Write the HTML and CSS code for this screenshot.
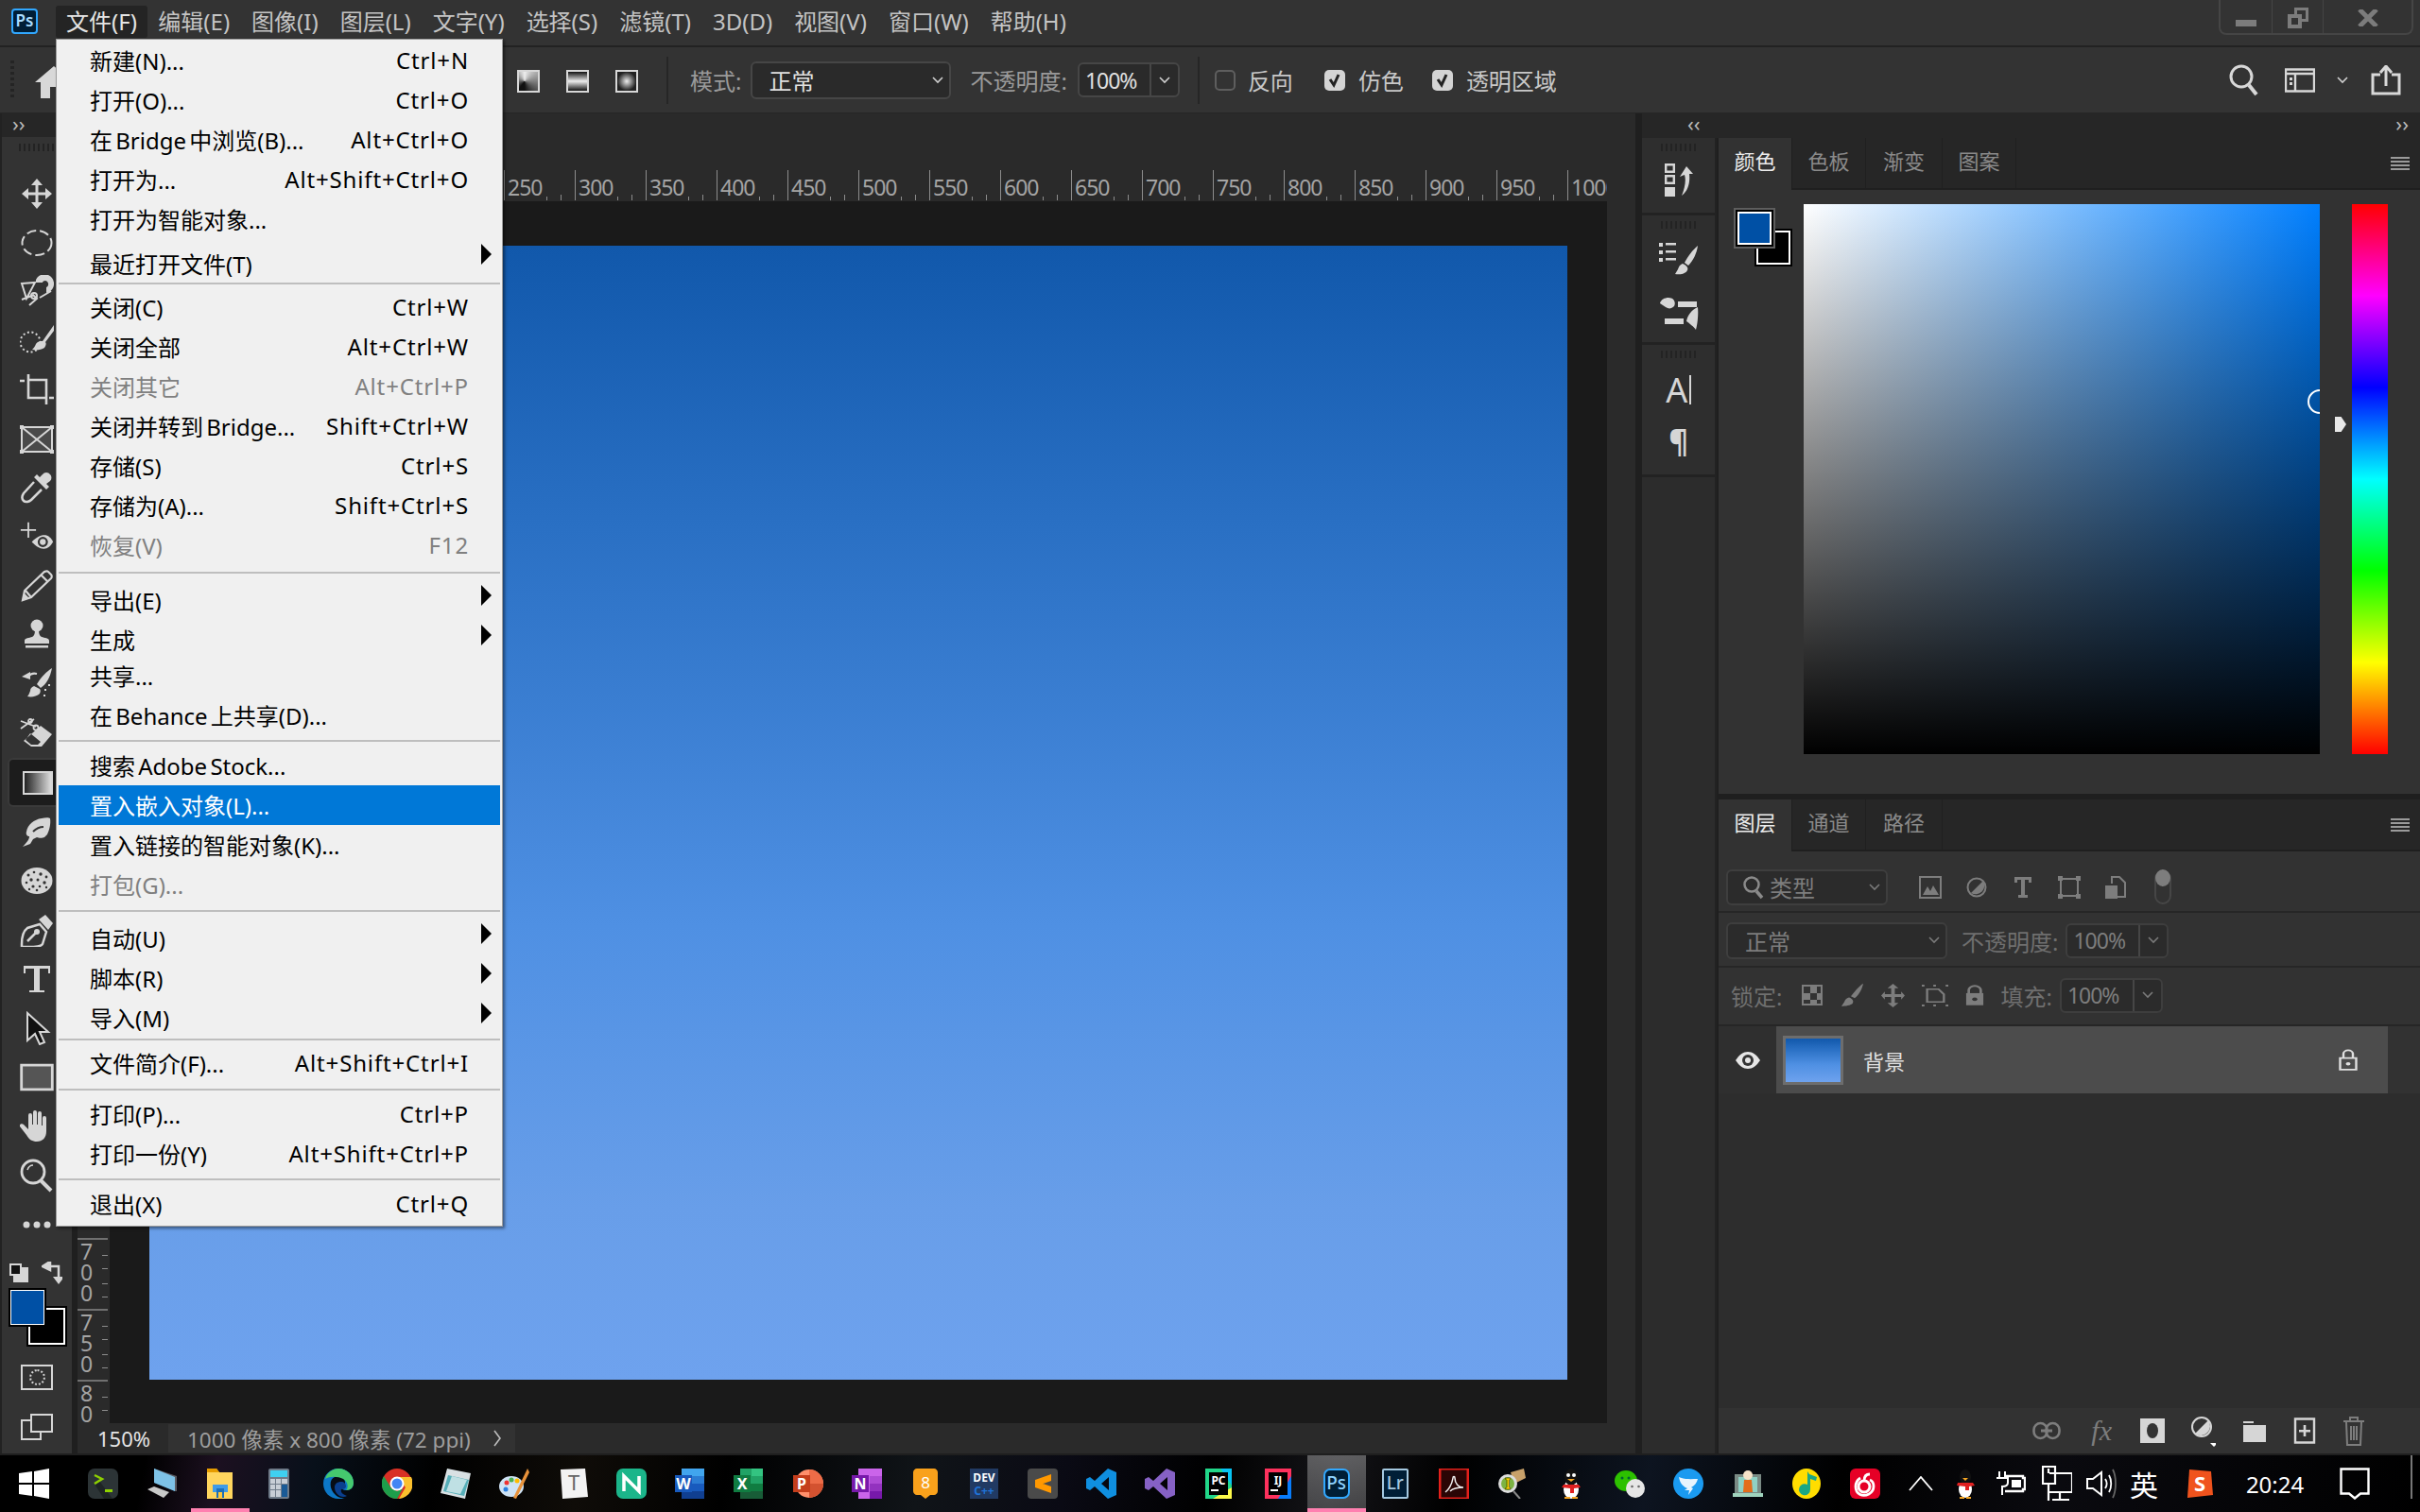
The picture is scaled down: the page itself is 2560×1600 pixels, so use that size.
FILE: index.html
```html
<!DOCTYPE html>
<html lang="zh-CN">
<head>
<meta charset="utf-8">
<title>Adobe Photoshop</title>
<link rel="stylesheet" href="styles.css">
</head>
<body>
<div class="app">
  <header class="titlebar">
    <div class="pslogo">Ps</div>
    <nav class="mainmenu">
      <span class="mi active">文件(F)</span><span class="mi">编辑(E)</span><span class="mi">图像(I)</span><span class="mi">图层(L)</span><span class="mi">文字(Y)</span><span class="mi">选择(S)</span><span class="mi">滤镜(T)</span><span class="mi">3D(D)</span><span class="mi">视图(V)</span><span class="mi">窗口(W)</span><span class="mi">帮助(H)</span>
    </nav>
    <div class="winbtns">
      <div class="wb wb1"><i class="wmin"></i></div>
      <div class="wb wb2"><svg viewBox="0 0 24 24" width="24" height="24"><path d="M8 1h15v15h-7v7H1V8h7zM11 4v4h5v5h4V4zM5 12v7h7v-7z" fill="#7c7c7c" fill-rule="evenodd"/></svg></div>
      <div class="wb wb3"><svg viewBox="0 0 22 18" width="22" height="18"><path d="M2 0l18 18M20 0L2 18" stroke="#7c7c7c" stroke-width="5" fill="none"/></svg></div>
    </div>
  </header>

  <section class="options">
    <div class="vgrip"></div>
    <svg class="home" viewBox="0 0 40 34" width="40" height="34"><path d="M20 0l20 17h-5v17H25V22h-9v12H6V17H0z" fill="#d8d8d8"/></svg>
    <div class="gico g-ang"></div>
    <div class="gico g-ref"></div>
    <div class="gico g-dia"></div>
    <div class="optsep s1"></div>
    <span class="lbl mode">模式:</span>
    <div class="sel optsel"><span>正常</span><svg class="chev" viewBox="0 0 12 8" width="12" height="8"><path d="M1 1l5 5 5-5" fill="none" stroke="#cfcfcf" stroke-width="1.6"/></svg></div>
    <span class="lbl opac">不透明度:</span>
    <div class="num optnum"><span class="val">100%</span><span class="car"><svg viewBox="0 0 12 8" width="12" height="8"><path d="M1 1l5 5 5-5" fill="none" stroke="#cfcfcf" stroke-width="1.6"/></svg></span></div>
    <div class="optsep s2"></div>
    <i class="cb off c1"></i><span class="cl cl1">反向</span>
    <i class="cb on c2"><svg viewBox="0 0 22 22" width="22" height="22"><path d="M6 10l4 6 5-11" fill="none" stroke="#222" stroke-width="3"/></svg></i><span class="cl cl2">仿色</span>
    <i class="cb on c3"><svg viewBox="0 0 22 22" width="22" height="22"><path d="M6 10l4 6 5-11" fill="none" stroke="#222" stroke-width="3"/></svg></i><span class="cl cl3">透明区域</span>
    <div class="optright">
      <svg viewBox="0 0 32 34" width="32" height="34"><circle cx="13" cy="13" r="11" fill="none" stroke="#d8d8d8" stroke-width="3"/><path d="M21 22l8 10" stroke="#d8d8d8" stroke-width="4"/></svg>
      <svg class="or-lay" viewBox="0 0 32 26" width="32" height="26"><path d="M1 1.5h30v23H1zM1 6h30M11 6v18" fill="none" stroke="#d8d8d8" stroke-width="2.4"/><path d="M5 10h3v3H5zM5 15h3v3H5z" fill="#d8d8d8"/></svg>
      <svg class="or-chev" viewBox="0 0 12 8" width="12" height="8"><path d="M1 1l5 5 5-5" fill="none" stroke="#cfcfcf" stroke-width="1.6"/></svg>
      <svg class="or-share" viewBox="0 0 32 32" width="32" height="32"><path d="M10 10H2v20h28V10h-8M16 22V2M10 8l6-7 6 7" fill="none" stroke="#d8d8d8" stroke-width="3"/></svg>
    </div>
  </section>

  <div class="work">
    <aside class="toolbar">
      <div class="collapse"><span>››</span></div>
      <div class="hgrip tgrip"></div>
      <div class="tools">
        <div class="tool"><svg viewBox="0 0 36 36"><path d="M18 2l6 7h-4.500v7.500H27V12l7 6-7 6v-4.500h-7.500V27H24l-6 7-6-7h4.500v-7.500H9V24l-7-6 7-6v4.500h7.500V9H12z"/></svg></div>
        <div class="tool"><svg viewBox="0 0 36 36"><ellipse cx="18" cy="18" rx="15.500" ry="13" fill="none" stroke="#d6d6d6" stroke-width="2" stroke-dasharray="10 4"/></svg></div>
        <div class="tool"><svg viewBox="0 0 36 36"><g fill="none" stroke="#d6d6d6" stroke-width="2"><path d="M2 9l14-1-9 17zM14 21l4 4-8 7M21 24l12-7M2 26l13-5"/><circle cx="15" cy="22" r="3"/></g><path d="M17 5a10 10 0 1 1 11 14v-6c3-1 3-6-1-7-2 0-3 1-3 2h-7z" fill="#d6d6d6"/></svg></div>
        <div class="tool"><svg viewBox="0 0 36 36"><circle cx="11" cy="19" r="10.500" fill="none" stroke="#d6d6d6" stroke-width="2" stroke-dasharray="2 2.600"/><path d="M36 1L24 18c-2 0-5 0-7 3-1 3-3 5-4 6 5 1 10 0 13-2 2-3 2-5 1-6l9-12z"/></svg></div>
        <div class="tool"><svg viewBox="0 0 36 36"><path d="M0 8h5M9 1v25h19M9 7h19v26M31 26h5" fill="none" stroke="#d6d6d6" stroke-width="2.600"/></svg></div>
        <div class="tool"><svg viewBox="0 0 36 30"><path d="M2 2h32v26H2z" fill="#4a4a4a" stroke="#d6d6d6" stroke-width="2"/><path d="M2 2l32 26M34 2L2 28" stroke="#d6d6d6" stroke-width="2"/><path d="M0 0h4v4H0zM32 0h4v4h-4zM0 26h4v4H0zM32 26h4v4h-4z"/></svg></div>
        <div class="tool"><svg viewBox="0 0 36 36"><path d="M24 3a5 5 0 0 1 8 0 5 5 0 0 1 0 7l-4 3 3 3-3 3-13-13 3-3 3 3z"/><path d="M15 11L4 23c-2 3-2 6 0 8s6 1 8-1l11-11" fill="none" stroke="#d6d6d6" stroke-width="2.500"/></svg></div>
        <div class="tool"><svg viewBox="0 0 40 36"><path d="M1 9h18M10 0v18" stroke="#d6d6d6" stroke-width="2" fill="none"/><path d="M14 23c6-6 11-8 15-8s8 3 10 8c-3 5-6 8-11 8s-9-3-14-8z"/><circle cx="27" cy="23" r="6" fill="#323232"/><circle cx="27" cy="23" r="3.500"/></svg></div>
        <div class="tool"><svg viewBox="0 0 36 36"><path d="M3 33l2-10L26 3c2-1 3-1 4 0l3 3c1 1 1 3 0 4L12 30zM6 23l6 7M23 7l7 7" fill="none" stroke="#d6d6d6" stroke-width="2.200"/><path d="M3 33l2-7 5 5z"/></svg></div>
        <div class="tool"><svg viewBox="0 0 36 36"><circle cx="18" cy="8" r="6.500"/><path d="M16 12h4c0 5 1 7 3 8 3 1 8 1 8 4v3H5v-3c0-3 5-3 8-4 2-1 3-3 3-8zM6 29h24v2.500H6z"/></svg></div>
        <div class="tool"><svg viewBox="0 0 36 36"><path d="M34 1c-5 3-12 10-16 17l4 4c6-4 10-11 12-21zM15 20c-3 1-4 3-4 5-1 3-2 5-3 6 4 1 10 0 13-3 1-2 1-4 0-5z"/><path d="M18 7c-4-1-7 0-9 3" fill="none" stroke="#d6d6d6" stroke-width="2"/><path d="M2 10l9-5 0 8zM26 23h2v2h-2zM30 18h2v2h-2zM25 29h2v2h-2z"/></svg></div>
        <div class="tool"><svg viewBox="0 0 36 36"><path d="M22 10l12 9-11 13H12l-8-6zM11 18l11 9-3 3H12l-6-5z" fill-rule="evenodd"/><g fill="none" stroke="#d6d6d6" stroke-width="1.800"><path d="M1 5l16 6M1 13L15 3"/><circle cx="11" cy="5" r="2"/><circle cx="17" cy="12" r="2.500"/></g></svg></div>
        <div class="tool active"><div class="t-grad"></div></div>
        <div class="tool"><svg viewBox="0 0 36 36"><path d="M3 34c5-5 7-8 7-11-2 0-4-2-3-5 1-7 8-13 16-14 4-1 8-1 9 0 1 6-1 13-3 17l-3 3c-2 1-6 1-8 0l-4 2-3 5z"/><path d="M14 18c3-3 7-5 11-5" fill="none" stroke="#333" stroke-width="2"/></svg></div>
        <div class="tool"><svg viewBox="0 0 36 30"><ellipse cx="18" cy="15" rx="16.500" ry="14"/><g fill="#333"><circle cx="9" cy="9" r="1.500"/><circle cx="15" cy="6" r="1.300"/><circle cx="22" cy="8" r="1.700"/><circle cx="28" cy="11" r="1.400"/><circle cx="12" cy="14" r="1.700"/><circle cx="19" cy="14" r="1.500"/><circle cx="26" cy="17" r="1.700"/><circle cx="7" cy="17" r="1.300"/><circle cx="14" cy="21" r="1.600"/><circle cx="21" cy="21" r="1.300"/><circle cx="10" cy="24" r="1.200"/><circle cx="28" cy="22" r="1.200"/><circle cx="18" cy="25" r="1.300"/></g></svg></div>
        <div class="tool"><svg viewBox="0 0 36 36"><path d="M2 33c0-7 2-14 6-17l13-4 7 8-4 13c-3 4-12 3-22 3zM8 30l9-9" fill="none" stroke="#d6d6d6" stroke-width="2.500"/><circle cx="18" cy="20" r="3"/><path d="M20 7l7-5 8 9-5 7z"/></svg></div>
        <div class="tool"><svg viewBox="0 0 36 36"><path d="M4 4h28v8h-2V7H21v23h5v2H10v-2h5V7H6v5H4z"/></svg></div>
        <div class="tool"><svg viewBox="0 0 36 36"><path d="M8 2l22 20h-9l5 11-5 2-5-11-8 7z" fill="#111" stroke="#d6d6d6" stroke-width="2"/></svg></div>
        <div class="tool"><svg viewBox="0 0 32 26"><path d="M1.500 1.500h29v23h-29z" fill="#555" stroke="#d6d6d6" stroke-width="2.500"/></svg></div>
        <div class="tool"><svg viewBox="0 0 36 36"><path d="M9 6a2 2 0 0 1 4 0v10h1V3a2 2 0 0 1 4 0v13h1V4a2 2 0 0 1 4 0v13h1V9a2 2 0 0 1 4 0v14c0 7-4 11-10 11-5 0-8-2-11-7l-7-9c-1-2 2-4 4-2l5 5z"/></svg></div>
        <div class="tool"><svg viewBox="0 0 36 36"><circle cx="14" cy="14" r="12" fill="none" stroke="#d6d6d6" stroke-width="2.800"/><path d="M22 23l11 11" stroke="#d6d6d6" stroke-width="4"/><path d="M8 12c1-3 3-5 6-5" fill="none" stroke="#d6d6d6" stroke-width="1.500"/></svg></div>
        <div class="tool"><svg viewBox="0 0 36 36"><circle cx="7" cy="18" r="3.500"/><circle cx="18" cy="18" r="3.500"/><circle cx="29" cy="18" r="3.500"/></svg></div>
      </div>
      <div class="colorbtns">
        <div class="defcol"><i class="dc-b"></i><i class="dc-f"></i></div>
        <svg viewBox="0 0 22 24" width="22" height="24"><path d="M9 0v9L1 5zM8 5h10v12" fill="none" stroke="#d6d6d6" stroke-width="2.500"/><path d="M9 0L2 5l7 5zM12 16h12l-6 8z" fill="#d6d6d6"/></svg>
      </div>
      <div class="tswatch"><i class="bgc"></i><i class="fgc"></i></div>
      <div class="maskbtn"><i></i></div>
      <div class="screenbtn"><i class="sb1"></i><i class="sb2"></i></div>
    </aside>

    <main class="doc">
      <div class="doctop"></div>
      <div class="hrwrap"><div class="hruler"><span class="rt">250</span><span class="rt">300</span><span class="rt">350</span><span class="rt">400</span><span class="rt">450</span><span class="rt">500</span><span class="rt">550</span><span class="rt">600</span><span class="rt">650</span><span class="rt">700</span><span class="rt">750</span><span class="rt">800</span><span class="rt">850</span><span class="rt">900</span><span class="rt">950</span><span class="rt">1000</span></div></div>
      <div class="docmid">
        <div class="vruler">
          <div class="vt"><span>7</span><span>0</span><span>0</span></div>
          <div class="vt"><span>7</span><span>5</span><span>0</span></div>
          <div class="vt"><span>8</span><span>0</span></div>
        </div>
        <div class="canvas"><div class="image"></div></div>
        <div class="vscroll"></div>
      </div>
      <div class="status">
        <span class="zoom">150%</span>
        <span class="info">1000 像素 x 800 像素 (72 ppi)<svg viewBox="0 0 10 18" width="10" height="18"><path d="M2 1l6 8-6 8" fill="none" stroke="#bdbdbd" stroke-width="1.600"/></svg></span>
      </div>
    </main>

    <aside class="panels">
      <div class="pstrip"><span class="l">‹‹</span><span class="r">››</span></div>
      <div class="pbody">
        <div class="dock">
          <div class="dsec d1"><div class="hgrip"></div>
            <svg viewBox="0 0 30 35" width="30" height="35"><path d="M1.200 1.200h8.600v7.600H1.200zM1.200 13.200h8.600v7.600H1.200z" fill="none" stroke="#d6d6d6" stroke-width="2.400"/><path d="M0 25h11v10H0z" fill="#d6d6d6"/><path d="M23 3l7 8h-4c1 9-1 18-8 23 3-7 5-16 3-22l-5 2z" fill="#d6d6d6"/></svg>
          </div>
          <div class="dsec d2"><div class="hgrip"></div>
            <svg class="ds-a" viewBox="0 0 42 34" width="42" height="34"><path d="M0 0h4v4H0zM7 0h11v2.500H7zM0 8h4v4H0zM7 8h11v2.500H7zM0 16h4v4H0zM7 16h11v2.500H7z" fill="#d6d6d6"/><path d="M41 3c-5 4-11 12-14 18l4 3c5-5 9-13 10-21zM25 22c-3 1-4 3-5 6l-3 5c5 1 11 0 13-4 1-2 0-5-5-7z" fill="#d6d6d6"/></svg>
            <svg class="ds-b" viewBox="0 0 42 34" width="42" height="34"><path d="M1 6c1-4 5-6 9-6 6 0 8 5 6 9-3 3-6 3-9 1zM20 4h20v6H20zM6 22h20v6H6zM41 10c-7 3-11 9-12 15 3 2 8 6 10 9 1-3 3-14 2-24z" fill="#d6d6d6"/></svg>
          </div>
          <div class="dsec d3"><div class="hgrip"></div>
            <div class="ds-txt"><span class="ds-A">A</span><i class="ds-bar"></i></div>
            <span class="ds-p">¶</span>
          </div>
        </div>
        <div class="pmain">
          <section class="panel color">
            <div class="tabs">
              <span class="tab on">颜色</span><span class="tab">色板</span><span class="tab t3">渐变</span><span class="tab">图案</span>
              <i class="burger"></i>
            </div>
            <div class="colorbody">
              <div class="pswatch"><i class="pbg"></i><i class="pfg"></i></div>
              <div class="picker"><i class="ring"></i></div>
              <i class="hmark"></i>
              <div class="hue"></div>
            </div>
          </section>
          <section class="panel layers">
            <div class="tabs">
              <span class="tab on">图层</span><span class="tab">通道</span><span class="tab t3">路径</span>
              <i class="burger"></i>
            </div>
            <div class="lrow filter">
              <div class="sel lsel1 dim"><svg viewBox="0 0 22 26" width="22" height="26"><circle cx="9" cy="10" r="7.500" fill="none" stroke="#8a8a8a" stroke-width="2.500"/><path d="M14 17l6 7" stroke="#8a8a8a" stroke-width="3.500"/></svg><span>类型</span><svg class="chev" viewBox="0 0 12 8" width="12" height="8"><path d="M1 1l5 5 5-5" fill="none" stroke="#7a7a7a" stroke-width="1.600"/></svg></div>
              <div class="ficons">
                <svg viewBox="0 0 24 28" width="24" height="28"><path d="M1 3h22v22H1z" fill="none" stroke="#7d7d7d" stroke-width="2"/><path d="M4 22l5-9 3 5 3-6 6 10z" fill="#7d7d7d"/></svg>
                <svg viewBox="0 0 24 28" width="24" height="28"><circle cx="12" cy="14" r="9.500" fill="none" stroke="#7d7d7d" stroke-width="2"/><path d="M19 7a9.500 9.500 0 0 1-13 13z" fill="#7d7d7d"/></svg>
                <svg viewBox="0 0 24 28" width="24" height="28"><path d="M3 3h18v6h-3V6h-4v16h3v3H7v-3h3V6H6v3H3z" fill="#7d7d7d"/></svg>
                <svg viewBox="0 0 24 24" width="24" height="24"><path d="M3 3h18v18H3z" fill="none" stroke="#7d7d7d" stroke-width="2"/><path d="M0 0h5v5H0zM19 0h5v5h-5zM0 19h5v5H0zM19 19h5v5h-5z" fill="#7d7d7d"/></svg>
                <svg viewBox="0 0 24 24" width="24" height="24"><path d="M8 8V1h8l6 6v15h-8" fill="none" stroke="#7d7d7d" stroke-width="2"/><path d="M1 10h13v14H1z" fill="#7d7d7d"/></svg>
                <div class="ftoggle"><i></i></div>
              </div>
            </div>
            <div class="lrow blend">
              <div class="sel lsel2 dim"><span>正常</span><svg class="chev" viewBox="0 0 12 8" width="12" height="8"><path d="M1 1l5 5 5-5" fill="none" stroke="#7a7a7a" stroke-width="1.600"/></svg></div>
              <span class="dl dl1">不透明度:</span>
              <div class="num lnum dim"><span class="val">100%</span><span class="car"><svg viewBox="0 0 12 8" width="12" height="8"><path d="M1 1l5 5 5-5" fill="none" stroke="#7a7a7a" stroke-width="1.600"/></svg></span></div>
            </div>
            <div class="lrow lock">
              <span class="dl dl2">锁定:</span>
              <div class="licons">
                <i class="chk"></i>
                <svg viewBox="0 0 26 40" width="26" height="26" preserveAspectRatio="none"><path d="M25 1c-5 5-10 15-13 21l4 3c5-6 8-16 9-24zM10 24c-3 1-4 4-5 7l-3 7c4 0 10-1 12-5 1-3 0-7-4-9z" fill="#7d7d7d"/></svg>
                <svg viewBox="0 0 26 36" width="25" height="25" preserveAspectRatio="none"><path d="M13 0l6 7h-4v9h7v-4l4 6-4 6v-4h-7v9h4l-6 7-6-7h4v-9H4v4l-4-6 4-6v4h7V7H7z" fill="#7d7d7d"/></svg>
                <svg viewBox="0 0 30 34" width="28" height="23" preserveAspectRatio="none"><path d="M6 7h13l6 8v12H6z" fill="none" stroke="#7d7d7d" stroke-width="2.500"/><path d="M0 0h3v3H0zM27 0h3v3h-3zM0 31h3v3H0zM27 31h3v3h-3zM13 0h3v3h-3zM13 31h3v3h-3z" fill="#7d7d7d"/></svg>
                <svg viewBox="0 0 22 36" width="20" height="23" preserveAspectRatio="none"><path d="M4 15V9a7 7 0 0 1 14 0v6" fill="none" stroke="#7d7d7d" stroke-width="3"/><path d="M1 14h20v20H1z" fill="#7d7d7d"/><circle cx="11" cy="24" r="3" fill="#333"/></svg>
              </div>
              <span class="dl dl3">填充:</span>
              <div class="num lnum dim"><span class="val">100%</span><span class="car"><svg viewBox="0 0 12 8" width="12" height="8"><path d="M1 1l5 5 5-5" fill="none" stroke="#7a7a7a" stroke-width="1.600"/></svg></span></div>
            </div>
            <div class="layerrow">
              <div class="eye"><svg viewBox="0 0 26 18" width="26" height="18"><path d="M0 9c4-6 8-9 13-9s9 3 13 9c-4 6-8 9-13 9S4 15 0 9z" fill="#e6e6e6"/><circle cx="13" cy="9" r="6" fill="#333"/><circle cx="13" cy="9" r="3" fill="#e6e6e6"/></svg></div>
              <div class="lcell">
                <div class="thumb"></div>
                <span class="lname">背景</span>
                <svg class="llock" viewBox="0 0 20 32" width="20" height="23" preserveAspectRatio="none"><path d="M5 13V7a5 5 0 0 1 10 0v6" fill="none" stroke="#e0e0e0" stroke-width="2.400"/><path d="M1.500 13.500h17v17h-17z" fill="none" stroke="#e0e0e0" stroke-width="2.400"/><circle cx="10" cy="22" r="2.500" fill="#e0e0e0"/></svg>
              </div>
            </div>
            <div class="lspace"></div>
            <div class="lfoot">
              <svg class="fo f-link" viewBox="0 0 30 20" width="30" height="20"><g fill="none" stroke="#7d7d7d" stroke-width="2.600"><rect x="1.500" y="2" width="14" height="16" rx="7"/><rect x="14.500" y="2" width="14" height="16" rx="7"/></g><path d="M9 8.500h12v3H9z" fill="#7d7d7d"/></svg>
              <span class="fo fx">fx</span>
              <svg class="fo" viewBox="0 0 26 26" width="26" height="26"><path d="M0 0h26v26H0z" fill="#d6d6d6"/><ellipse cx="13" cy="13" rx="6" ry="8" fill="#333"/></svg>
              <svg class="fo" viewBox="0 0 26 34" width="26" height="34"><circle cx="11" cy="13" r="10" fill="none" stroke="#d6d6d6" stroke-width="2"/><path d="M18 6a10 10 0 0 1-14 14z" fill="#d6d6d6"/><path d="M20 30h8l-4 4z" fill="#fff"/></svg>
              <svg class="fo" viewBox="0 0 26 24" width="26" height="24"><path d="M1 6V2h11v2H1zM1 6h24v18H1z" fill="#d6d6d6"/></svg>
              <svg class="fo" viewBox="0 0 24 28" width="24" height="28"><path d="M2 1.500h20v25H2z" fill="none" stroke="#d6d6d6" stroke-width="2.400"/><path d="M6 13h12v2.500H6zM10.700 8h2.600v12h-2.600z" fill="#d6d6d6"/></svg>
              <svg class="fo" viewBox="0 0 24 32" width="24" height="32"><path d="M1 6h22M8 6V2h8v4M4 7l1 24h14l1-24M9 11v15M12 11v15M15 11v15" fill="none" stroke="#7d7d7d" stroke-width="2"/></svg>
            </div>
          </section>
        </div>
      </div>
    </aside>
  </div>

  <footer class="taskbar">
    <div class="start"><svg viewBox="0 0 32 32" width="32" height="32"><path d="M0 5l14-2v12H0zM16 3l16-3v15H16zM0 17h14v12L0 27zM16 17h16v15l-16-3z" fill="#fff"/></svg></div>
    <div class="apps">
      <div class="app-i"><svg viewBox="0 0 32 32"><rect width="32" height="32" rx="7" fill="#2c3436"/><path d="M8 18l9 14h9L12 13z" fill="#1e2425"/><path d="M7 7l8 4-8 5" fill="none" stroke="#8ed100" stroke-width="2.500"/><path d="M18 22h8v3h-8z" fill="#8ed100"/></svg></div>
      <div class="app-i"><svg viewBox="0 0 32 32"><path d="M8 0l22 9v15L8 15z" fill="#48b5ee"/><path d="M8 0v15l22 9h2V8z" fill="#cfd8dc" opacity=".4"/><path d="M1 22l7-3 16 6-6 6z" fill="#c9c9c9"/></svg></div>
      <div class="app-i"><svg viewBox="0 0 32 32"><path d="M2 0h10l3 4h14v28H2z" fill="#ffd55e"/><path d="M2 0h10l3 4H2z" fill="#e69c00"/><path d="M8 17h16v8H8z" fill="#3f9be8"/><path d="M12 21h8v10h-8z" fill="#1c6fb8"/><path d="M14 25h4v7h-4z" fill="#ffc83d"/></svg></div>
      <div class="app-i"><svg viewBox="0 0 32 32"><rect x="5" width="22" height="32" rx="2" fill="#6f7b89"/><path d="M7 2h18v7H7z" fill="#3fd0f0"/><g fill="#c8ced6"><path d="M7 11h5v5H7zM13 11h5v5h-5zM19 11h6v5h-6zM7 17h5v5H7zM13 17h5v5h-5zM7 23h5v7H7zM13 23h5v7h-5z"/></g><path d="M19 17h6v13h-6z" fill="#1a5a96"/></svg></div>
      <div class="app-i"><svg viewBox="0 0 32 32"><path d="M16 0c9 0 16 7 16 15 0 5-3 8-8 8-3 0-5-2-5-3 3 0 4-2 4-5 0-6-6-9-11-6C6 11 6 22 13 28c2 2 6 4 10 3-2 1-4 1-7 1C7 32 0 25 0 16S7 0 16 0z" fill="#0c77c6"/><path d="M2 11C4 4 10 0 16 0c9 0 16 7 16 15 0 5-3 8-8 8 3-3 2-9-3-12-6-3-14-3-19 0z" fill="#45c96e"/><path d="M12 20c0-4 3-6 7-6 3 0 5 2 5 5 0 2-2 3-5 3-1 3 1 5 6 7-6 3-13-2-13-9z" fill="#0a3f8e"/></svg></div>
      <div class="app-i"><svg viewBox="0 0 32 32"><circle cx="16" cy="16" r="16" fill="#d93025"/><path d="M16 32A16 16 0 0 1 2 8l8 13 6 3 6-3-6 11z" fill="#1e9e4b"/><path d="M16 9h15a16 16 0 0 1-13 23l7-12z" fill="#fbc02d"/><circle cx="16" cy="16" r="7.500" fill="#fff"/><circle cx="16" cy="16" r="5.500" fill="#4285f4"/></svg></div>
      <div class="app-i"><svg viewBox="0 0 32 32"><path d="M7 0l25 5-6 27L0 26z" fill="#d9e1e4"/><path d="M8 7l22 5-5 17L3 24z" fill="#56aeb8"/><path d="M12 8l16 4-7 15L6 24z" fill="#bfe0e4"/></svg></div>
      <div class="app-i"><svg viewBox="0 0 32 32"><ellipse cx="13" cy="19" rx="13" ry="11" fill="#cfe3f5"/><circle cx="8" cy="15" r="2.500" fill="#e33"/><circle cx="13" cy="12" r="2.500" fill="#4caf50"/><circle cx="19" cy="13" r="2.500" fill="#fb0"/><circle cx="7" cy="22" r="2.500" fill="#2a7fe0"/><path d="M30 0l2 4-14 28-3-1z" fill="#e8923a"/></svg></div>
      <div class="app-i"><svg viewBox="0 0 32 32"><path d="M3 1l26-1 3 30-27 2z" fill="#f3f3f3"/><text x="17" y="23" class="sv-t" font-size="22" fill="#666" text-anchor="middle">T</text></svg></div>
      <div class="app-i"><svg viewBox="0 0 32 32"><rect width="32" height="32" rx="7" fill="#1bb58a"/><path d="M8 24V8l16 16V8" fill="none" stroke="#fff" stroke-width="3.500"/></svg></div>
      <div class="app-i"><svg viewBox="0 0 32 32"><path d="M7 0h24v32H7z" fill="#2b7cd3"/><path d="M7 0h24v8H7z" fill="#41a5ee"/><path d="M7 16h24v8H7z" fill="#185abd"/><path d="M7 24h24v8H7z" fill="#103f91"/><path d="M0 7h18v18H0z" fill="#185abd"/><text x="9" y="22" class="sv-t" font-size="16" font-weight="700" fill="#fff" text-anchor="middle">W</text></svg></div>
      <div class="app-i"><svg viewBox="0 0 32 32"><path d="M7 0h24v32H7z" fill="#21a366"/><path d="M19 0h12v8H19z" fill="#33c481"/><path d="M7 16h24v8H7z" fill="#107c41"/><path d="M7 24h24v8H7z" fill="#185c37"/><path d="M0 7h18v18H0z" fill="#107c41"/><text x="9" y="22" class="sv-t" font-size="16" font-weight="700" fill="#fff" text-anchor="middle">X</text></svg></div>
      <div class="app-i"><svg viewBox="0 0 32 32"><circle cx="17" cy="16" r="15" fill="#ff8f6b"/><path d="M17 16h15a15 15 0 0 1-15 15z" fill="#d35230"/><path d="M17 16h15a15 15 0 0 0-15-15z" fill="#ed6c47"/><path d="M0 7h18v18H0z" fill="#c43e1c"/><text x="9" y="22" class="sv-t" font-size="16" font-weight="700" fill="#fff" text-anchor="middle">P</text></svg></div>
      <div class="app-i"><svg viewBox="0 0 32 32"><path d="M7 0h25v32H7z" fill="#ca64ea"/><path d="M19 8h13v8H19z" fill="#ae4bd5"/><path d="M19 16h13v8H19z" fill="#9332bf"/><path d="M19 24h13v8H19z" fill="#7719aa"/><path d="M0 7h18v18H0z" fill="#7719aa"/><text x="9" y="22" class="sv-t" font-size="16" font-weight="700" fill="#fff" text-anchor="middle">N</text></svg></div>
      <div class="app-i"><svg viewBox="0 0 32 32"><path d="M7 0h18c2 0 4 2 4 4v20c0 2-2 4-4 4h-4l-5 4-5-4H7c-2 0-4-2-4-4V4c0-2 2-4 4-4z" fill="#f9a11b"/><text x="16" y="21" class="sv-t" font-size="17" fill="#fff" text-anchor="middle">8</text></svg></div>
      <div class="app-i"><svg viewBox="0 0 32 32"><path d="M1 0h30v32H1z" fill="#213a63"/><text x="16" y="14" class="sv-t" font-size="12" font-weight="700" fill="#fff" text-anchor="middle">DEV</text><text x="16" y="28" class="sv-t" font-size="12" font-weight="700" fill="#1f73d8" text-anchor="middle">C++</text></svg></div>
      <div class="app-i"><svg viewBox="0 0 32 32"><rect width="32" height="32" rx="4" fill="#4a4a4a"/><path d="M25 6v7L8 19v-7zM8 13l17 6v7L8 20z" fill="#ff9800"/></svg></div>
      <div class="app-i"><svg viewBox="0 0 32 32"><path d="M23 0l9 4v24l-9 4-14-13-5 4-4-2V11l4-2 5 4zM24 9l-8 7 8 7z" fill="#0f8fe0" fill-rule="evenodd"/></svg></div>
      <div class="app-i"><svg viewBox="0 0 32 32"><path d="M23 0l9 4v24l-9 4-14-13-5 4-4-2V11l4-2 5 4zM24 9l-8 7 8 7z" fill="#8661c5" fill-rule="evenodd"/></svg></div>
      <div class="app-i"><svg viewBox="0 0 32 32"><path d="M2 0h28v32H2z" fill="#21d789"/><path d="M18 0h12v18z" fill="#07c3f2"/><path d="M10 32l20-12v12z" fill="#fcf84a"/><path d="M6 4h20v24H6z" fill="#000"/><text x="16" y="17" class="sv-t" font-size="12" font-weight="700" fill="#fff" text-anchor="middle">PC</text><path d="M8 22h8v2H8z" fill="#fff"/></svg></div>
      <div class="app-i"><svg viewBox="0 0 32 32"><path d="M2 0h28v32H2z" fill="#fe315d"/><path d="M16 32L30 8v24z" fill="#087cfa"/><path d="M6 4h20v24H6z" fill="#000"/><text x="16" y="17" class="sv-t" font-size="12" font-weight="700" fill="#fff" text-anchor="middle">IJ</text><path d="M8 22h8v2H8z" fill="#fff"/></svg></div>
      <div class="app-i cur"><div class="lo lo-ps">Ps</div></div>
      <div class="app-i"><div class="lo lo-lr">Lr</div></div>
      <div class="app-i"><svg viewBox="0 0 32 32"><path d="M1 0h30v32H1z" fill="#2a0505" stroke="#e3201b" stroke-width="3"/><path d="M7 25c3-2 7-8 8-15 0-2 2-2 2 0 0 6 4 10 9 10-6 0-12 2-14 4" fill="none" stroke="#f2f2f2" stroke-width="1.500"/></svg></div>
      <div class="app-i"><svg viewBox="0 0 32 32"><path d="M14 4l14-4 2 10-12 6z" fill="#c8a16a"/><circle cx="11" cy="16" r="10" fill="#ddd"/><circle cx="11" cy="16" r="7" fill="#7cb342"/><text x="11" y="22" class="sv-t" font-size="16" font-weight="700" fill="#ffd600" stroke="#000" stroke-width=".5" text-anchor="middle">I</text><path d="M17 24l7 8" stroke="#888" stroke-width="2"/></svg></div>
      <div class="app-i"><svg viewBox="0 0 32 32"><ellipse cx="16" cy="22" rx="8" ry="10" fill="#fff"/><ellipse cx="16" cy="9" rx="7" ry="9" fill="#111"/><path d="M8 17h16l2 3-7 1v5h-4v-5l-9-1z" fill="#e02020"/><circle cx="13" cy="7" r="2" fill="#fff"/><circle cx="19" cy="7" r="2" fill="#fff"/><path d="M12 11h8l-4 3z" fill="#f5a623"/><path d="M9 30h6v2H9zM17 30h6v2h-6z" fill="#f5a623"/></svg></div>
      <div class="app-i"><svg viewBox="0 0 32 32"><ellipse cx="12" cy="13" rx="12" ry="11" fill="#2dc100"/><ellipse cx="22" cy="21" rx="10" ry="10" fill="#e6e6e6"/><circle cx="8" cy="10" r="1.500" fill="#063"/><circle cx="15" cy="10" r="1.500" fill="#063"/><circle cx="18.500" cy="19" r="1.300" fill="#666"/><circle cx="25.500" cy="19" r="1.300" fill="#666"/></svg></div>
      <div class="app-i"><svg viewBox="0 0 32 32"><ellipse cx="16" cy="16" rx="16" ry="16" fill="#1a9af0"/><path d="M6 9c7 3 14 2 20 2-1 4-3 7-7 9l2 1-5 7 1-5-5 0 3-2c-5-2-8-6-9-12z" fill="#e8f4fd"/></svg></div>
      <div class="app-i"><svg viewBox="0 0 32 32"><path d="M2 6h28v20H2z" fill="#7a8a84"/><path d="M6 9h20v16H6z" fill="#8fd1c4"/><circle cx="16" cy="7" r="5" fill="#f7e3c9"/><path d="M12 12h8l1 13H11z" fill="#e36d1a"/><path d="M0 26h32v4H0z" fill="#9fd3bd"/></svg></div>
      <div class="app-i"><svg viewBox="0 0 32 32"><ellipse cx="16" cy="16" rx="15" ry="16" fill="#ffdd00"/><path d="M19 6l8 3-1 4-6-2v11a6 6 0 1 1-3-5V3z" fill="#1ba784"/></svg></div>
      <div class="app-i"><svg viewBox="0 0 32 32"><rect width="32" height="32" rx="6" fill="#e60026"/><circle cx="15" cy="19" r="6" fill="none" stroke="#fff" stroke-width="3"/><path d="M15 13c0-5 2-7 6-7M21 12c5 2 6 11-1 15-6 3-14 1-14-8 0-4 2-7 5-9" fill="none" stroke="#fff" stroke-width="2.800"/></svg></div>
    </div>
    <div class="tray">
      <svg class="t1" viewBox="0 0 26 16" width="26" height="16"><path d="M1 15L13 1l12 14" fill="none" stroke="#fff" stroke-width="1.800"/></svg>
      <svg class="t2" viewBox="0 0 22 32" width="22" height="32"><ellipse cx="11" cy="22" rx="7" ry="9" fill="#fff"/><ellipse cx="11" cy="9" rx="6" ry="8" fill="#111"/><path d="M3 15h16l2 3-6 1v4h-4v-4l-9-1z" fill="#e02020"/><path d="M8 10h6l-3 3z" fill="#f5a623"/><path d="M5 30h5v2H5zM12 30h5v2h-5z" fill="#f5a623"/></svg>
      <svg class="t3a" viewBox="0 0 32 28" width="32" height="28"><path d="M4 1v7M10 1v7M1 8h12v5c0 3-2 4-6 4v9" fill="none" stroke="#fff" stroke-width="2"/><path d="M10 6h19v2h2v12h-2v2H10" fill="none" stroke="#fff" stroke-width="2.400"/><path d="M17 10h10v8H17z" fill="#fff"/></svg>
      <svg class="t4" viewBox="0 0 32 38" width="32" height="38"><path d="M1 1h13v18H1zM7 3v5M7 19v18M8 8h24v20H8M19 28v8M11 36h18" fill="none" stroke="#fff" stroke-width="2.200"/></svg>
      <svg class="t5" viewBox="0 0 32 34" width="32" height="34"><path d="M1 12h6l9-7v24l-9-7H1z" fill="none" stroke="#fff" stroke-width="2"/><path d="M20 12c2 3 2 7 0 10M24 8c3 5 3 13 0 18" fill="none" stroke="#fff" stroke-width="1.800"/><path d="M28 2c4 8 4 22 0 30" fill="none" stroke="#666" stroke-width="1.800"/></svg>
      <span class="ime">英</span>
      <svg class="t6" viewBox="0 0 32 32" width="32" height="32"><path d="M6 1l23 2 2 25-27 3z" fill="#f0531d"/><text x="17" y="24" class="sv-t" font-size="22" font-weight="700" fill="#fff" text-anchor="middle">S</text></svg>
      <span class="clock">20:24</span>
      <svg class="t7" viewBox="0 0 32 34" width="32" height="34"><path d="M1.500 1.500h29v26H22l-6 5-6-5H1.500z" fill="none" stroke="#fff" stroke-width="2.400"/></svg>
    </div>
  </footer>

  <div class="filemenu">
    <div class="row"><span>新建(N)...</span><span class="sc-k">Ctrl+N</span></div>
    <div class="row"><span>打开(O)...</span><span class="sc-k">Ctrl+O</span></div>
    <div class="row"><span>在 Bridge 中浏览(B)...</span><span class="sc-k">Alt+Ctrl+O</span></div>
    <div class="row"><span>打开为...</span><span class="sc-k">Alt+Shift+Ctrl+O</span></div>
    <div class="row"><span>打开为智能对象...</span></div>
    <div class="row low"><span>最近打开文件(T)</span><i class="arr"></i></div>
    <div class="sep sa"></div>
    <div class="row"><span>关闭(C)</span><span class="sc-k">Ctrl+W</span></div>
    <div class="row"><span>关闭全部</span><span class="sc-k">Alt+Ctrl+W</span></div>
    <div class="row dis"><span>关闭其它</span><span class="sc-k">Alt+Ctrl+P</span></div>
    <div class="row"><span>关闭并转到 Bridge...</span><span class="sc-k">Shift+Ctrl+W</span></div>
    <div class="row"><span>存储(S)</span><span class="sc-k">Ctrl+S</span></div>
    <div class="row"><span>存储为(A)...</span><span class="sc-k">Shift+Ctrl+S</span></div>
    <div class="row dis"><span>恢复(V)</span><span class="sc-k">F12</span></div>
    <div class="sep sb"></div>
    <div class="row"><span>导出(E)</span><i class="arr"></i></div>
    <div class="row"><span>生成</span><i class="arr"></i></div>
    <div class="row short"><span>共享...</span></div>
    <div class="row"><span>在 Behance 上共享(D)...</span></div>
    <div class="sep sc"></div>
    <div class="row"><span>搜索 Adobe Stock...</span></div>
    <div class="row hl"><span>置入嵌入对象(L)...</span></div>
    <div class="row"><span>置入链接的智能对象(K)...</span></div>
    <div class="row dis"><span>打包(G)...</span></div>
    <div class="sep sd"></div>
    <div class="row"><span>自动(U)</span><i class="arr"></i></div>
    <div class="row"><span>脚本(R)</span><i class="arr"></i></div>
    <div class="row"><span>导入(M)</span><i class="arr"></i></div>
    <div class="sep se"></div>
    <div class="row"><span>文件简介(F)...</span><span class="sc-k">Alt+Shift+Ctrl+I</span></div>
    <div class="sep sf"></div>
    <div class="row"><span>打印(P)...</span><span class="sc-k">Ctrl+P</span></div>
    <div class="row"><span>打印一份(Y)</span><span class="sc-k">Alt+Shift+Ctrl+P</span></div>
    <div class="sep sg"></div>
    <div class="row"><span>退出(X)</span><span class="sc-k">Ctrl+Q</span></div>
  </div>
</div>
</body>
</html>
```
FILE: styles.css
```css
* { box-sizing: border-box; }
html, body { margin: 0; padding: 0; background: #1f1f1f; }
body { font-family: "Noto Sans", "Noto Sans CJK SC", sans-serif; font-size: 24px; color: #d0d0d0; }
i { display: block; font-style: normal; }
svg { display: block; flex: none; }
.sv-t { font-family: "Noto Sans", sans-serif; }

.app { position: relative; width: 2560px; height: 1600px; overflow: hidden; display: flex; flex-direction: column; }

/* title bar */
.titlebar { height: 50px; flex: none; background: #333; border-bottom: 2px solid #222; display: flex; align-items: flex-start; }
.pslogo { width: 28px; height: 27px; margin: 9px 0 0 12px; background: #001e36; border: 2px solid #31a8ff; border-radius: 4px; color: #a8dcff; font-size: 17px; line-height: 22px; text-align: center; font-weight: 600; }
.mainmenu { display: flex; margin: 6px 0 0 19px; height: 34px; color: #c4c4c4; }
.mi { padding: 0 11.500px; line-height: 34px; white-space: nowrap; }
.mi.active { background: #242424; border-radius: 3px; color: #e4e4e4; padding: 0 11px; }
.winbtns { margin-left: auto; margin-right: 7px; display: flex; height: 37px; border: 2px solid #454545; border-top: 0; border-radius: 0 0 8px 8px; }
.wb { display: flex; align-items: center; justify-content: center; border-right: 1px solid #454545; }
.wb1 { width: 55px; }
.wb2 { width: 54px; padding-top: 3px; }
.wb3 { width: 93px; border-right: 0; padding-top: 2px; }
.wmin { width: 22px; height: 7px; background: #7c7c7c; margin-top: 13px; }

/* options */
.options { height: 70px; flex: none; background: #333; border-bottom: 1px solid #262626; display: flex; align-items: center; }
.vgrip { width: 4px; height: 42px; margin-left: 11px; background: repeating-linear-gradient(#242424 0 3px, transparent 3px 6px); }
.home { margin: 4px 0 0 22px; }
.gico { width: 24px; height: 24px; border: 2px solid #d8d8d8; margin-top: 2px; }
.g-ang { margin-left: 470px; background: conic-gradient(from 0deg at 30% 50%, #eee, #111 50%, #111 60%, #eee); }
.g-ref { margin-left: 28px; background: linear-gradient(#111, #eee 50%, #111); }
.g-dia { margin-left: 28px; background: radial-gradient(circle, #eee, #222 70%); }
.optsep { width: 2px; height: 50px; background: #262626; }
.s1 { margin-left: 30px; }
.s2 { margin-left: 19px; }
.lbl { color: #9a9a9a; white-space: nowrap; }
.mode { margin-left: 23px; }
.sel { display: flex; align-items: center; position: relative; background: #2a2a2a; border: 2px solid #464646; border-radius: 6px; color: #e0e0e0; }
.chev { margin-left: auto; }
.optsel { width: 212px; height: 40px; margin-left: 10px; padding: 0 6px 0 17px; }
.opac { margin-left: 20px; }
.num { display: flex; background: #2a2a2a; border: 2px solid #464646; border-radius: 6px; color: #e0e0e0; }
.val { flex: 1; padding-left: 6px; font-size: 23px; letter-spacing: -1px; white-space: nowrap; align-self: center; }
.car { width: 30px; border-left: 2px solid #464646; display: flex; align-items: center; justify-content: center; }
.optnum { width: 108px; height: 37px; margin-left: 11px; }
.cb { width: 22px; height: 22px; border-radius: 5px; flex: none; }
.cb.off { border: 2px solid #5e5e5e; }
.cb.on { background: #d4d4d4; }
.c1 { margin-left: 16px; }
.cl { color: #c8c8c8; white-space: nowrap; }
.cl1 { margin: 0 33px 0 13px; }
.cl2 { margin: 0 30px 0 14px; }
.cl3 { margin-left: 14px; }
.optright { margin-left: auto; display: flex; align-items: center; padding-right: 20px; }
.or-lay { margin-left: 27px; }
.or-chev { margin-left: 23px; }
.or-share { margin-left: 24px; }

/* work area */
.work { flex: 1; min-height: 0; display: flex; background: #1f1f1f; }

.toolbar { width: 76px; flex: none; background: #333; border-left: 2px solid #222; display: flex; flex-direction: column; position: relative; height: 1418px; }
.collapse { height: 25px; background: #262626; font-size: 22px; line-height: 20px; color: #bbb; padding-left: 11px; }
.hgrip { height: 8px; background: repeating-linear-gradient(90deg, #232323 0 2px, transparent 2px 5px); }
.tgrip { margin: 7px 16px 0 18px; }
.tools { display: flex; flex-direction: column; margin-top: 19px; }
.tool { height: 51.95px; flex: none; display: flex; align-items: center; justify-content: center; color: #d6d6d6; }
.tool svg { width: 36px; height: 36px; fill: #d6d6d6; }
.tool.active { margin-left: 6px; padding-right: 6px; background: #1c1c1c; border-radius: 6px 0 0 6px; border: 2px solid #3a3a3a; border-right: 0; }
.t-grad { width: 32px; height: 25px; border: 2px solid #d6d6d6; background: linear-gradient(90deg, #222, #ddd); }

.colorbtns { display: flex; align-items: center; justify-content: space-between; padding: 0 10px 0 8px; margin-top: 12px; height: 26px; }
.defcol { position: relative; width: 20px; height: 20px; }
.dc-b { position: absolute; left: 4px; top: 4px; width: 16px; height: 16px; background: #d6d6d6; }
.dc-f { position: absolute; left: 0; top: 0; width: 13px; height: 13px; background: #111; border: 2px solid #d6d6d6; }
.tswatch { position: relative; height: 60px; margin-top: 4px; }
.fgc { position: absolute; left: 8px; top: 0; width: 38px; height: 39px; background: #0050a5; border: 2px solid #fff; outline: 2px solid #000; outline-offset: -1px; }
.bgc { position: absolute; left: 28px; top: 20px; width: 39px; height: 39px; background: #000; border: 2px solid #fff; outline: 2px solid #000; }
.maskbtn { width: 34px; height: 27px; margin: 20px 0 0 20px; border: 2px solid #d6d6d6; display: flex; align-items: center; justify-content: center; }
.maskbtn i { width: 17px; height: 17px; border-radius: 50%; border: 2px dotted #d6d6d6; }
.screenbtn { position: relative; height: 26px; margin-top: 25px; }
.sb1 { position: absolute; left: 20px; top: 6px; width: 22px; height: 22px; border: 2px solid #d6d6d6; }
.sb2 { position: absolute; left: 30px; top: 0; width: 24px; height: 20px; border: 2px solid #d6d6d6; background: #333; }

.doc { flex: none; margin-left: 6px; display: flex; flex-direction: column; height: 1418px; width: 1648px; }
.doctop { height: 60px; background: #2a2a2a; flex: none; }
.hrwrap { height: 33px; flex: none; background: #2a2a2a; }
.hruler { height: 33px; display: flex; padding-left: 451px; width: 1618px; overflow: hidden; }
.rt { width: 75px; flex: none; border-left: 1px solid #8c8c8c; height: 32px; font-size: 23px; line-height: 36px; color: #a4a4a4; padding-left: 3px; letter-spacing: -1px; white-space: nowrap; background: linear-gradient(#8c8c8c,#8c8c8c) 59px 100%/1px 6px no-repeat, linear-gradient(#8c8c8c,#8c8c8c) 44px 100%/1px 4px no-repeat; }
.docmid { flex: 1; min-height: 0; display: flex; }
.vruler { width: 34px; flex: none; background: #2a2a2a; padding-top: 1097px; overflow: hidden; }
.vt { height: 75px; border-top: 2px solid #707070; width: 32px; padding: 1px 0 0 3px; display: flex; flex-direction: column; font-size: 23px; line-height: 22px; color: #a4a4a4; background: linear-gradient(#8c8c8c,#8c8c8c) 26px 16px/6px 1px no-repeat, linear-gradient(#8c8c8c,#8c8c8c) 26px 30px/6px 1px no-repeat, linear-gradient(#8c8c8c,#8c8c8c) 26px 46px/6px 1px no-repeat, linear-gradient(#8c8c8c,#8c8c8c) 26px 60px/6px 1px no-repeat; }
.canvas { width: 1584px; flex: none; background: #1a1a1a; padding: 47px 0 0 42px; }
.image { width: 1500px; height: 1200px; background: linear-gradient(#1158ab, #2a70c4 25%, #4f90e3 60%, #689ee9 85%, #6ea2ee); }
.vscroll { flex: 1; background: #2a2a2a; }
.status { height: 32px; flex: none; background: #2a2a2a; display: flex; align-items: center; font-size: 22px; }
.zoom { width: 96px; padding-left: 21px; color: #e4e4e4; }
.info { width: 367px; height: 30px; background: #323232; display: flex; align-items: center; justify-content: space-between; padding: 0 14px 0 20px; color: #9e9e9e; white-space: nowrap; font-size: 22.500px; }

.panels { flex: 1; min-width: 0; margin-left: 3px; display: flex; flex-direction: column; height: 1418px; }
.pstrip { height: 26px; flex: none; background: #262626; margin-left: 4px; display: flex; justify-content: space-between; padding: 0 12px 0 48px; font-size: 22px; line-height: 20px; color: #bbb; }
.pbody { flex: 1; min-height: 0; display: flex; }
.dock { width: 79px; margin-left: 4px; margin-right: 2px; flex: none; background: #2c2c2c; display: flex; flex-direction: column; border-right: 2px solid #222; }
.dsec { background: #2e2e2e; border-bottom: 3px solid #222; display: flex; flex-direction: column; align-items: center; flex: none; }
.dsec .hgrip { width: 38px; margin-top: 6px; flex: none; }
.d1 { height: 82px; }
.d1 svg { margin-top: 13px; }
.d2 { height: 137px; }
.d2 .ds-a { margin-top: 15px; }
.d2 .ds-b { margin-top: 24px; }
.d3 { height: 140px; }
.ds-txt { display: flex; align-items: center; margin-top: 18px; height: 31px; color: #d6d6d6; }
.ds-A { font-size: 36px; line-height: 31px; }
.ds-bar { width: 1.500px; height: 31px; background: #d6d6d6; margin-left: 2px; }
.ds-p { font-size: 32px; line-height: 30px; color: #d6d6d6; margin-top: 24px; font-weight: 700; }
.pmain { flex: 1; min-width: 0; display: flex; flex-direction: column; gap: 6px; }
.panel { background: #323232; display: flex; flex-direction: column; }
.panel.color { height: 694px; flex: none; }
.panel.layers { flex: 1; min-height: 0; }
.tabs { height: 55px; flex: none; background: #262626; display: flex; align-items: stretch; position: relative; border-bottom: 2px solid #1f1f1f; font-size: 22px; }
.tab { width: 78px; display: flex; align-items: center; justify-content: center; color: #8a8a8a; border-right: 1px solid #1f1f1f; padding-bottom: 8px; }
.tab.t3 { width: 81px; }
.tab.on { background: #323232; color: #ececec; margin-bottom: -2px; padding-bottom: 10px; }
.burger { position: absolute; right: 11px; top: 20px; width: 20px; height: 14px; background: repeating-linear-gradient(#9a9a9a 0 2px, transparent 2px 4px); }
.colorbody { flex: 1; position: relative; display: flex; padding: 15px 0 0 90px; }
.pswatch { position: absolute; left: 16px; top: 19px; }
.pfg { position: absolute; left: 4px; top: 4px; width: 36px; height: 35px; background: #0050a5; border: 2px solid #fff; box-shadow: 0 0 0 2px #000, 0 0 0 4px #5e5e5e; }
.pbg { position: absolute; left: 24px; top: 24px; width: 36px; height: 36px; background: #000; border: 2px solid #fff; box-shadow: 0 0 0 2px #000; }
.picker { width: 546px; height: 582px; position: relative; overflow: hidden; background: linear-gradient(transparent, #000), linear-gradient(90deg, #fff, #007fff); }
.ring { position: absolute; left: 533px; top: 196px; width: 26px; height: 26px; border-radius: 50%; border: 2px solid #fff; }
.hmark { width: 12px; height: 16px; background: #e8e8e8; margin: 225px 0 0 16px; clip-path: polygon(0 0, 55% 0, 100% 50%, 55% 100%, 0 100%); }
.hue { width: 38px; height: 582px; margin-left: 6px; background: linear-gradient(#f00, #f0f 16.67%, #00f 33.33%, #0ff 50%, #0f0 66.67%, #ff0 83.33%, #f00); }

.lrow { display: flex; align-items: center; border-bottom: 2px solid #262626; flex: none; padding-left: 8px; }
.filter { height: 65px; padding-top: 18px; padding-bottom: 6px; }
.blend { height: 58px; padding-top: 2px; }
.lock { height: 62px; padding-bottom: 2px; }
.dim { background: #2b2b2b; border-color: #3e3e3e; color: #7d7d7d; }
.lsel1 { width: 171px; height: 38px; padding: 0 6px 0 16px; }
.lsel1 span { margin-left: 6px; }
.lsel2 { width: 234px; height: 39px; padding: 0 6px 0 18px; }
.ficons { display: flex; align-items: center; gap: 25px; margin-left: 33px; }
.ftoggle { width: 18px; height: 36px; border: 2px solid #464646; border-radius: 9px; position: relative; margin-left: 4px; }
.ftoggle i { position: absolute; left: -1px; top: -3px; width: 16px; height: 18px; border-radius: 50%; background: #7d7d7d; }
.dl { color: #6f6f6f; white-space: nowrap; }
.dl1 { margin-left: 15px; }
.lnum { width: 109px; height: 37px; margin-left: 8px; }
.dl2 { margin-left: 5px; }
.licons { display: flex; align-items: center; gap: 18px; margin-left: 21px; }
.chk { width: 22px; height: 22px; background: conic-gradient(#7d7d7d 25%, #333 0 50%, #7d7d7d 0 75%, #333 0) 0 0/14px 14px; border: 2px solid #7d7d7d; }
.dl3 { margin-left: 17px; }
.layerrow { height: 71px; flex: none; display: flex; align-items: stretch; }
.eye { width: 61px; display: flex; align-items: center; justify-content: center; background: #2f2f2f; }
.lcell { width: 647px; background: #4c4c4c; display: flex; align-items: center; padding: 0 27px 0 7px; color: #e0e0e0; }
.thumb { width: 64px; height: 52px; border: 3px solid #6d6d6d; background: linear-gradient(#1158ab, #2a70c4 25%, #4f90e3 60%, #6ea2ee); }
.lname { margin-left: 21px; font-size: 22px; }
.llock { margin-left: auto; margin-right: 5px; }
.lspace { flex: 1; background: #2d2d2d; }
.lfoot { height: 48px; flex: none; display: flex; align-items: center; justify-content: flex-end; padding-right: 58px; gap: 28px; }
.f-link { margin-right: 4px; }
.fx { font-family: "Liberation Serif", serif; font-style: italic; font-size: 30px; color: #7d7d7d; line-height: 30px; margin-right: 2px; }

/* taskbar */
.taskbar { height: 60px; flex: none; display: flex; align-items: center; background: linear-gradient(100deg, #000 0, #000 6%, #1c1020 9%, #08101a 13%, #000 18%, #0f0c08 24%, #000 30%, #101418 38%, #0a0a14 44%, #000 50%, #141418 55%, #000 60%, #0d1420 68%, #000 76%, #0a0a0f 85%, #000 100%); position: relative; color: #fff; }
.start { width: 78px; flex: none; padding-left: 20px; }
.apps { display: flex; }
.app-i { width: 62.13px; height: 60px; flex: none; display: flex; align-items: center; justify-content: center; }
.app-i svg { width: 32px; height: 32px; }
.app-i.cur { background: linear-gradient(rgba(255,255,255,.32), rgba(255,255,255,.22)); border-bottom: 4px solid #ff80b0; }
.app-i:nth-child(3) { border-bottom: 4px solid #ff80b0; }
.app-i:nth-child(3) svg { margin-top: 4px; }
.app-i.cur .lo { margin-top: 4px; }
.lo { width: 28px; height: 32px; border-radius: 4px; font-size: 19px; line-height: 27px; text-align: center; font-weight: 500; }
.lo-ps { background: #001e36; border: 2px solid #31a8ff; color: #8fd2ff; border-radius: 7px; }
.lo-lr { background: #001e36; border: 2px solid #a4c8e0; color: #a4c8e0; border-radius: 2px; }
.tray { display: flex; align-items: center; flex: 1; min-width: 0; height: 60px; position: relative; }
.tray::after { content: ""; position: absolute; right: 8px; top: 0; width: 2px; height: 46px; background: #777; }
.tray .t1 { margin-left: 15px; }
.tray .t2 { margin-left: 23px; }
.tray .t3a { margin-left: 21px; }
.tray .t4 { margin-left: 17px; }
.tray .t5 { margin-left: 15px; }
.ime { font-size: 30px; margin-left: 14px; }
.tray .t6 { margin-left: 27px; }
.clock { margin-left: 34px; font-size: 24px; }
.tray .t7 { margin-left: 38px; }

/* file menu */
.filemenu { position: absolute; left: 59px; top: 41px; width: 473px; height: 1257px; background: #f0f0f0; border: 1px solid #9c9c9c; padding: 1px 2px; box-shadow: 2px 2px 3px rgba(0,0,0,.45); color: #000; z-index: 5; }
.row { height: 42px; display: flex; align-items: center; justify-content: space-between; padding: 0 33px 2px 33px; white-space: nowrap; position: relative; word-spacing: -3px; }
.sc-k { letter-spacing: .85px; }
.row.low { height: 46px; padding-top: 4px; padding-bottom: 0; }
.row.short { height: 38px; padding-bottom: 6px; }
.dis { color: #808080; }
.hl { background: #0078d7; color: #fff; }
.arr { position: absolute; left: 447px; top: 5px; width: 0; height: 0; border-left: 11px solid #000; border-top: 11px solid transparent; border-bottom: 11px solid transparent; }
.sep { height: 2px; background: #bebebe; }
.sa { margin: 0 0 3px; }
.sb { margin: 7px 0 7px; }
.sc { margin: 5px 0 4px; }
.sd { margin: 6px 0 7px; }
.se { margin: 1px 0 3px; }
.sf { margin: 6px 0 4px; }
.sg { margin: 5px 0 4px; }
```
